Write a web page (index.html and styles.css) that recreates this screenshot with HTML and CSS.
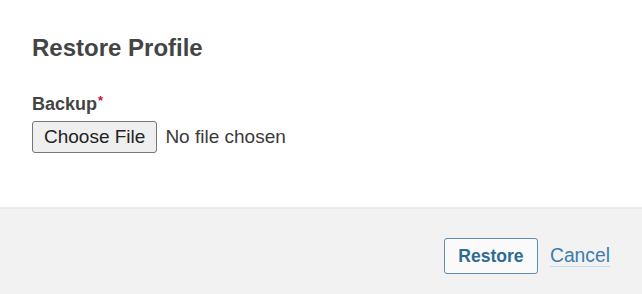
FILE: index.html
```html
<!DOCTYPE html>
<html>
<head>
<meta charset="utf-8">
<link rel="stylesheet" href="styles.css">
</head>
<body>
<div class="dialog">
  <div class="content">
    <h2 class="title">Restore Profile</h2>
    <div class="field">
      <label class="label" for="backup">Backup<span class="req">*</span></label>
      <input class="file" id="backup" type="file">
    </div>
  </div>
  <div class="footer">
    <button class="btn" type="button">Restore</button>
    <a class="cancel" href="#">Cancel</a>
  </div>
</div>
</body>
</html>
```

FILE: styles.css
```css
html, body {
  margin: 0;
  padding: 0;
  background: #ffffff;
}
body {
  font-family: "Liberation Sans", Arial, sans-serif;
  color: #444444;
}
.dialog {
  width: 642px;
  height: 294px;
  display: flex;
  flex-direction: column;
}
.content {
  height: 207px;
  box-sizing: border-box;
  padding: 34px 32px 0 32px;
}
.title {
  margin: 0;
  font-size: 24px;
  line-height: 28px;
  font-weight: bold;
  color: #444444;
}
.field {
  margin-top: 31px;
  display: flex;
  flex-direction: column;
  align-items: flex-start;
}
.label {
  font-size: 18px;
  line-height: 22px;
  font-weight: bold;
  color: #444444;
}
.req {
  color: #c8102e;
  font-size: 13px;
  vertical-align: top;
  line-height: 16px;
  margin-left: 1px;
}
.file {
  margin-top: 6px;
  font-family: "Liberation Sans", Arial, sans-serif;
  font-size: 19px;
  color: #3a3a3a;
}
.file::file-selector-button {
  font-family: "Liberation Sans", Arial, sans-serif;
  font-size: 19px;
  color: #222222;
  background: #efefef;
  border: 1px solid #767676;
  border-radius: 3px;
  padding: 4px 11px;
  margin-right: 8px;
}
.footer {
  flex: 1;
  background: #f2f2f2;
  border-top: 2px solid #ebebeb;
  display: flex;
  justify-content: flex-end;
  align-items: flex-start;
  padding: 29px 32px 0 0;
  gap: 12px;
}
.btn {
  font-family: "Liberation Sans", Arial, sans-serif;
  font-size: 17.5px;
  font-weight: bold;
  line-height: 20px;
  color: #2f6a95;
  background: #fafafa;
  border: 1px solid #5c8db4;
  border-radius: 3px;
  padding: 7px 13.5px;
  margin: 0;
}
.cancel {
  font-size: 19.3px;
  line-height: 36px;
  color: #3b7cad;
  text-decoration: underline;
  text-decoration-color: #c3dcee;
  text-underline-offset: 4px;
}
```
